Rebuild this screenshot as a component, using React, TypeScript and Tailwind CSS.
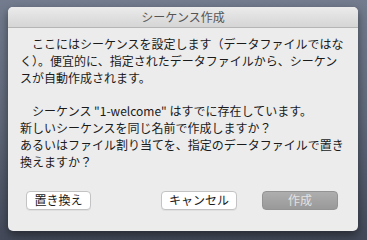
import React from 'react';

const jp = { fontFamily: '"Noto Sans CJK JP", "Liberation Sans", sans-serif' };

const App: React.FC = () => {
  return (
    <div
      className="w-[367px] h-[240px] overflow-hidden bg-gradient-to-b from-[#727c8e] via-[#5f6879] to-[#434959] pt-[7px] pl-[8px]"
      style={jp}
    >
      <div className="w-[350px] h-[224px] rounded-[5px] bg-[#ececec] shadow-[0_4px_10px_rgba(0,0,0,0.45)] flex flex-col overflow-hidden">
        {/* Title bar */}
        <div className="h-[21px] flex items-center justify-center bg-gradient-to-b from-[#ebebeb] to-[#d5d5d5] border-b border-[#b5b5b5] text-[12px] text-[#555555]">
          シーケンス作成
        </div>

        <div className="px-[12px] pt-[8px] text-[12px] leading-[16.85px] text-[#1a1a1a] whitespace-nowrap">
          <div>　ここにはシーケンスを設定します（データファイルではな</div>
          <div>く）。便宜的に、指定されたデータファイルから、シーケン</div>
          <div>スが自動作成されます。</div>
          <div>&nbsp;</div>
          <div>　シーケンス "1-welcome" はすでに存在しています。</div>
          <div>新しいシーケンスを同じ名前で作成しますか？</div>
          <div>あるいはファイル割り当てを、指定のデータファイルで置き</div>
          <div>換えますか？</div>
        </div>

        <div className="flex items-center mt-[20px] pl-[18px] pr-[20px]">
          <button className="h-[19px] w-[65px] rounded-[4px] bg-white border border-[#c3c3c3] shadow-[0_1px_0_rgba(0,0,0,0.05)] text-[12px] text-[#1a1a1a] leading-none">
            置き換え
          </button>
          <button className="ml-auto h-[19px] w-[76px] rounded-[4px] bg-white border border-[#c3c3c3] shadow-[0_1px_0_rgba(0,0,0,0.05)] text-[12px] text-[#1a1a1a] leading-none">
            キャンセル
          </button>
          <button className="ml-[25px] h-[19px] w-[76px] rounded-[4px] bg-gradient-to-b from-[#aeaeae] to-[#999999] border border-[#939393] text-[12px] text-[#e2e2e2] leading-none">
            作成
          </button>
        </div>
      </div>
    </div>
  );
};

export default App;
